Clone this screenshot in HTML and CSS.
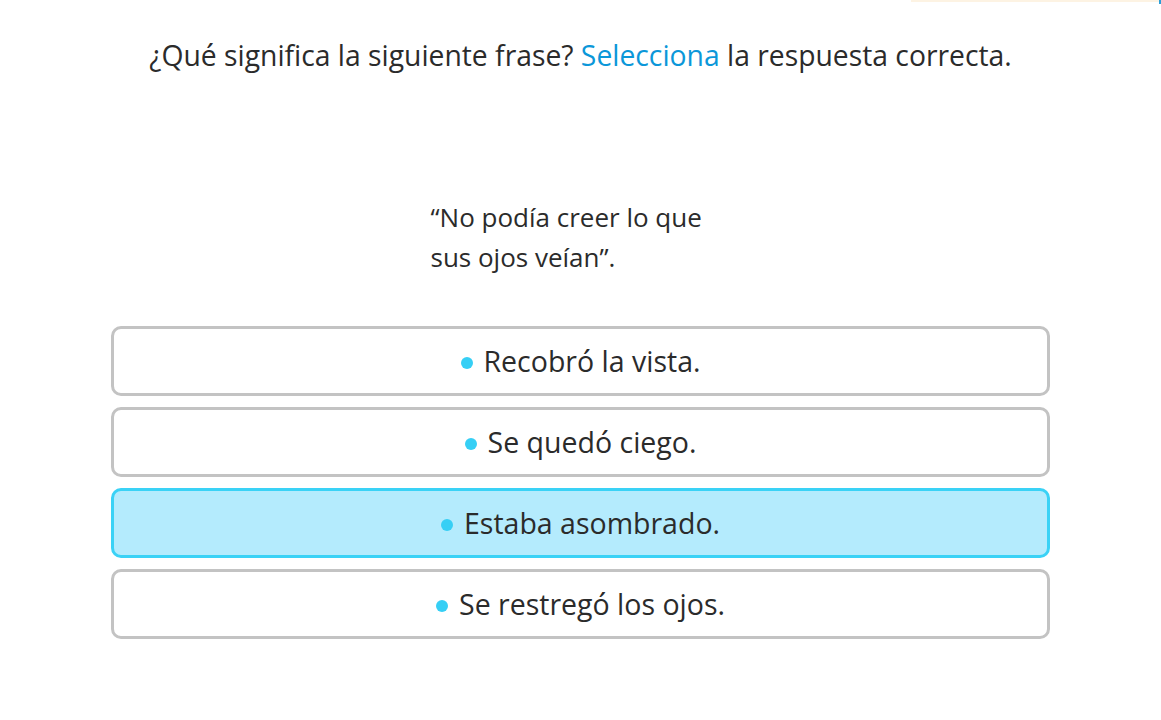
FILE: index.html
```html
<!DOCTYPE html>
<html lang="es">
<head>
<meta charset="utf-8">
<title>Pregunta</title>
<link rel="stylesheet" href="styles.css">
</head>
<body>
<div class="topbar"><div class="topbar-fill"></div></div>
<main class="page">
  <h1 class="instruction">¿Qué significa la siguiente frase? <span class="accent">Selecciona</span> la respuesta correcta.</h1>
  <p class="quote">“No podía creer lo que<br>sus ojos veían”.</p>
  <div class="options">
    <button class="option"><span class="dot"></span>Recobró la vista.</button>
    <button class="option"><span class="dot"></span>Se quedó ciego.</button>
    <button class="option selected"><span class="dot"></span>Estaba asombrado.</button>
    <button class="option"><span class="dot"></span>Se restregó los ojos.</button>
  </div>
</main>
</body>
</html>
```
FILE: styles.css
```css
html, body {
  margin: 0;
  padding: 0;
  background: #ffffff;
}
body {
  font-family: "Open Sans", "Noto Sans", sans-serif;
  color: #2b2b2b;
  position: relative;
  width: 1161px;
  height: 720px;
  overflow: hidden;
}
.topbar {
  position: absolute;
  top: 0;
  right: 0;
  width: 250px;
  height: 2px;
  background: #fdf3e3;
}
.topbar-fill {
  position: absolute;
  right: 0;
  top: 0;
  width: 2px;
  height: 4px;
  background: #2a9fd8;
}
.page {
  display: flex;
  flex-direction: column;
  align-items: center;
  padding-top: 35px;
}
.instruction {
  margin: 0;
  font-weight: 400;
  font-size: 28.3px;
  line-height: 40px;
  text-align: center;
}
.accent {
  color: #0b97d9;
}
.quote {
  margin: 122px 0 0 0;
  width: 300px;
  font-size: 26px;
  line-height: 40px;
}
.options {
  margin-top: 49px;
  width: 939px;
  display: flex;
  flex-direction: column;
  gap: 11px;
}
.option {
  height: 70px;
  border: 3px solid #c3c3c3;
  border-radius: 10px;
  background: #ffffff;
  font-family: inherit;
  font-size: 28.5px;
  color: #2b2b2b;
  display: flex;
  align-items: center;
  justify-content: center;
  gap: 11px;
  padding: 0;
}
.option.selected {
  background: #b4ebfd;
  border-color: #3ad2f6;
}
.dot {
  width: 12px;
  height: 12px;
  border-radius: 50%;
  background: #36cff5;
  margin-top: 3px;
}
```
